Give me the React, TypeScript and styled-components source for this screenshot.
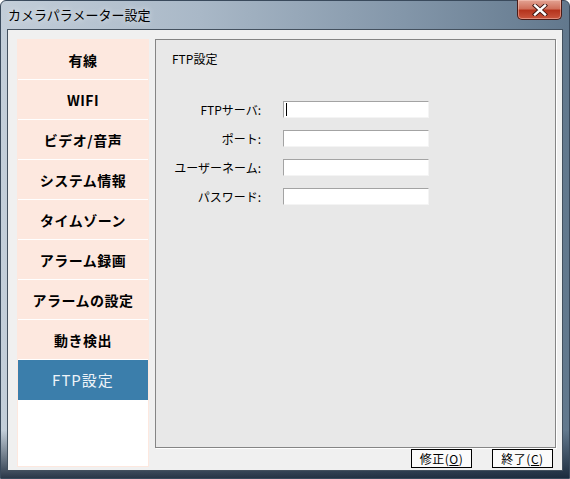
import { Fragment } from "react";
import styled, { createGlobalStyle } from "styled-components";

const GlobalStyle = createGlobalStyle`
  html, body {
    margin: 0;
    padding: 0;
    background: #ffffff;
  }
  body {
    font-family: "Noto Sans CJK JP", "Noto Sans", sans-serif;
  }
`;

const Window = styled.div`
  box-sizing: border-box;
  width: 570px;
  height: 479px;
  display: flex;
  flex-direction: column;
  padding: 0 6px 7px 6px;
  border: 1px solid #3a4a5c;
  border-radius: 6px 6px 0 0;
  background:
    linear-gradient(to bottom, rgba(0, 0, 0, 0) 90%, rgba(16, 30, 48, 0.85) 100%),
    linear-gradient(to right, #c3ced9 0%, #a9b8c7 35%, #8497aa 70%, #62788d 100%);
`;

const TitleBar = styled.div`
  height: 28px;
  display: flex;
  align-items: flex-start;
  justify-content: space-between;
`;

const TitleText = styled.span`
  margin-top: 5px;
  padding-left: 1px;
  font-size: 13px;
  line-height: 17px;
  color: #000000;
  text-shadow: 0 0 6px rgba(255, 255, 255, 0.8);
`;

const CloseButton = styled.div`
  box-sizing: border-box;
  width: 45px;
  height: 20px;
  margin-top: -1px;
  margin-right: 1px;
  display: flex;
  align-items: center;
  justify-content: center;
  border: 1px solid #4a1c18;
  border-top: none;
  border-radius: 0 0 5px 5px;
  background: linear-gradient(to bottom, #e3a393 0%, #d0715c 45%, #b5341d 55%, #c9563e 100%);
  box-shadow: inset 0 0 0 1px rgba(255, 210, 200, 0.45);
`;

const Client = styled.div`
  flex: 1;
  display: flex;
  gap: 6px;
  padding: 9px 6px 2px 9px;
  background: #f0f0f0;
  border: 1px solid #43505e;
  min-height: 0;
`;

const Sidebar = styled.div`
  box-sizing: border-box;
  width: 132px;
  display: flex;
  flex-direction: column;
  background: #ffffff;
  border: 1px solid #fde8df;
  margin-bottom: 1px;
`;

const NavItem = styled.div<{ $active?: boolean }>`
  box-sizing: border-box;
  height: 40px;
  display: flex;
  align-items: center;
  justify-content: center;
  background: ${(p) => (p.$active ? "#3b7eab" : "#fde8df")};
  border-bottom: 1px solid ${(p) => (p.$active ? "#3b7eab" : "#ffffff")};
  color: ${(p) => (p.$active ? "#eef3f8" : "#000000")};
  font-size: ${(p) => (p.$active ? "15px" : "14px")};
  font-weight: ${(p) => (p.$active ? 400 : 700)};
  letter-spacing: ${(p) => (p.$active ? "1px" : "0.5px")};
`;

const RightColumn = styled.div`
  flex: 1;
  display: flex;
  flex-direction: column;
  gap: 1px;
`;

const Panel = styled.div`
  flex: 1;
  background: #e8e8e8;
  border: 1px solid #858585;
  box-shadow: 1px 1px 0 #ffffff;
  padding-top: 11px;
`;

const PanelTitle = styled.div`
  margin-left: 16px;
  font-size: 12px;
  line-height: 16px;
  color: #000000;
`;

const Form = styled.div`
  display: grid;
  grid-template-columns: 105px 146px;
  column-gap: 22px;
  row-gap: 12px;
  margin-top: 34px;
  align-items: center;
`;

const Label = styled.label`
  justify-self: end;
  font-size: 12px;
  line-height: 17px;
  color: #000000;
  white-space: nowrap;
`;

const Field = styled.div<{ $focused?: boolean }>`
  box-sizing: border-box;
  height: 17px;
  background: #ffffff;
  border-top: 1px solid #a3a3a3;
  border-left: 1px solid #a3a3a3;
  border-right: 1px solid #f4f4f4;
  border-bottom: 1px solid #f4f4f4;
  position: relative;
  &::after {
    content: "";
    display: ${(p) => (p.$focused ? "block" : "none")};
    position: absolute;
    left: 2px;
    top: 1px;
    width: 1px;
    height: 13px;
    background: #000000;
  }
`;

const Footer = styled.div`
  height: 19px;
  display: flex;
  justify-content: flex-end;
  gap: 20px;
  padding-right: 3px;
`;

const Button = styled.div`
  box-sizing: border-box;
  width: 61px;
  height: 19px;
  display: flex;
  align-items: center;
  justify-content: center;
  background: #fbfbfb;
  border: 1px solid #000000;
  font-size: 12px;
  letter-spacing: 0.5px;
  color: #000000;
  u {
    text-decoration: underline;
  }
`;

const navItems = [
  "有線",
  "WIFI",
  "ビデオ/音声",
  "システム情報",
  "タイムゾーン",
  "アラーム録画",
  "アラームの設定",
  "動き検出",
  "FTP設定",
];

const fields = ["FTPサーバ:", "ポート:", "ユーザーネーム:", "パスワード:"];

export default function App() {
  return (
    <>
      <GlobalStyle />
      <Window>
        <TitleBar>
          <TitleText>カメラパラメーター設定</TitleText>
          <CloseButton>
            <svg width="16" height="12" viewBox="0 0 16 12">
              <path
                d="M3 1.5 L13 10.5 M13 1.5 L3 10.5"
                stroke="#3b1410"
                strokeWidth="4.2"
                strokeLinecap="square"
              />
              <path
                d="M3 1.5 L13 10.5 M13 1.5 L3 10.5"
                stroke="#ffffff"
                strokeWidth="2.4"
                strokeLinecap="square"
              />
            </svg>
          </CloseButton>
        </TitleBar>
        <Client>
          <Sidebar>
            {navItems.map((item) => (
              <NavItem key={item} $active={item === "FTP設定"}>
                {item}
              </NavItem>
            ))}
          </Sidebar>
          <RightColumn>
            <Panel>
              <PanelTitle>FTP設定</PanelTitle>
              <Form>
                {fields.map((f, i) => (
                  <Fragment key={f}>
                    <Label>{f}</Label>
                    <Field $focused={i === 0} />
                  </Fragment>
                ))}
              </Form>
            </Panel>
            <Footer>
              <Button>
                修正(<u>O</u>)
              </Button>
              <Button>
                終了(<u>C</u>)
              </Button>
            </Footer>
          </RightColumn>
        </Client>
      </Window>
    </>
  );
}
